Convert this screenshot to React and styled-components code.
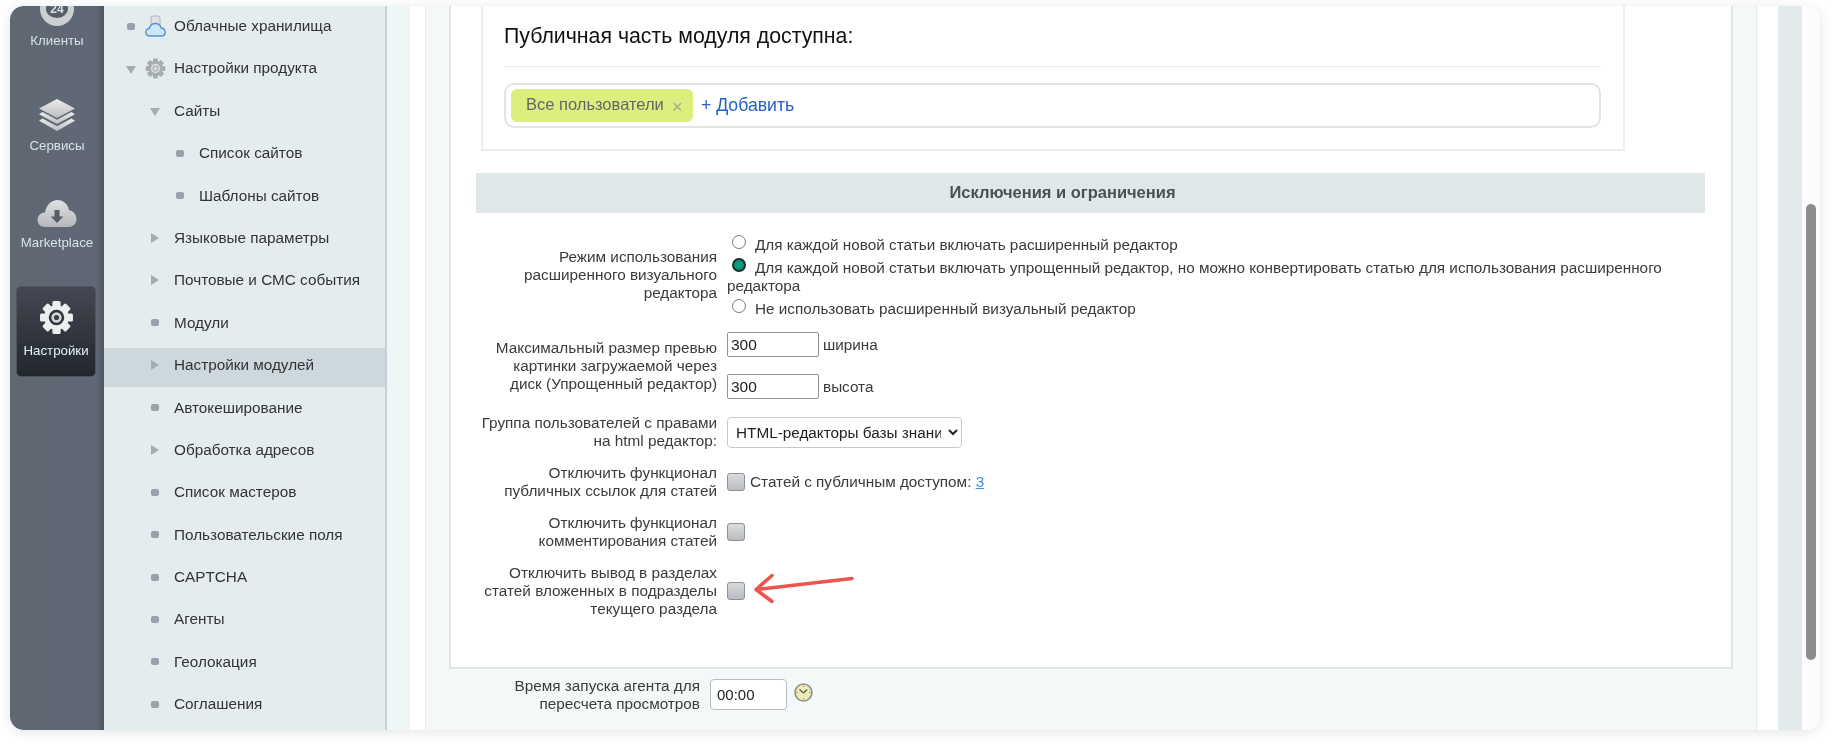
import React from 'react';
import styled, { createGlobalStyle } from 'styled-components';

const GlobalStyle = createGlobalStyle`
  html, body {
    margin: 0;
    height: 100%;
    background: #fff;
    overflow: hidden;
  }
  body {
    font-family: "Liberation Sans", Arial, sans-serif;
    color: #3a3a3a;
  }
`;

const menuItems = [
  { text: 'Облачные хранилища', level: 0, marker: 'dot', icon: 'cloud' },
  { text: 'Настройки продукта', level: 0, marker: 'down', icon: 'gear' },
  { text: 'Сайты', level: 1, marker: 'down' },
  { text: 'Список сайтов', level: 2, marker: 'dot' },
  { text: 'Шаблоны сайтов', level: 2, marker: 'dot' },
  { text: 'Языковые параметры', level: 1, marker: 'right' },
  { text: 'Почтовые и СМС события', level: 1, marker: 'right' },
  { text: 'Модули', level: 1, marker: 'dot' },
  { text: 'Настройки модулей', level: 1, marker: 'right', active: true },
  { text: 'Автокеширование', level: 1, marker: 'dot' },
  { text: 'Обработка адресов', level: 1, marker: 'right' },
  { text: 'Список мастеров', level: 1, marker: 'dot' },
  { text: 'Пользовательские поля', level: 1, marker: 'dot' },
  { text: 'CAPTCHA', level: 1, marker: 'dot' },
  { text: 'Агенты', level: 1, marker: 'dot' },
  { text: 'Геолокация', level: 1, marker: 'dot' },
  { text: 'Соглашения', level: 1, marker: 'dot' },
];

const levelPadding = [19, 43, 68];
const gearTeeth = [0, 45, 90, 135, 180, 225, 270, 315];

function GearIcon({ size, body, hole, core, dot }) {
  return (
    <svg width={size} height={size} viewBox="0 0 34 34">
      {gearTeeth.map((deg) => (
        <rect key={deg} x="13" y="1" width="8" height="9" rx="1.500" fill={body} transform={`rotate(${deg} 17 17)`} />
      ))}
      <circle cx="17" cy="17" r="12" fill={body} />
      <circle cx="17" cy="17" r="7.500" fill={hole} />
      <circle cx="17" cy="17" r="5" fill={core} />
      <circle cx="17" cy="17" r="2.500" fill={dot} />
    </svg>
  );
}

function LayersIcon() {
  return (
    <svg width="38" height="32" viewBox="0 0 38 32">
      <defs>
        <linearGradient id="layerFill" x1="0" y1="0" x2="0" y2="1">
          <stop offset="0" stopColor="#eceded" />
          <stop offset="1" stopColor="#b9bcbf" />
        </linearGradient>
      </defs>
      <path d="M19 0 37 9.500 19 19 1 9.500Z" fill="url(#layerFill)" />
      <path d="M4.500 13 19 20.800 33.500 13 37 15.300 19 25 1 15.300Z" fill="url(#layerFill)" />
      <path d="M4.500 19.500 19 27.300 33.500 19.500 37 21.800 19 32 1 21.800Z" fill="url(#layerFill)" />
    </svg>
  );
}

function MarketCloudIcon() {
  return (
    <svg width="40" height="29" viewBox="0 0 40 29">
      <defs>
        <linearGradient id="cloudFill" x1="0" y1="0" x2="0" y2="1">
          <stop offset="0" stopColor="#dfe0e1" />
          <stop offset="1" stopColor="#b5b8bb" />
        </linearGradient>
      </defs>
      <path
        d="M8 28C3 28 .5 24.500 .5 21 .5 16.500 4 13.500 8 13.500 9 6 14.500 1 20.500 1 26.500 1 31 5.500 32 11 36.500 12 39.500 15.500 39.500 20 39.500 24.500 36 28 31.500 28Z"
        fill="url(#cloudFill)"
      />
      <path d="M17.500 11h5v6.500h3.800L20 24l-6.300-6.500h3.800Z" fill="#555e69" />
    </svg>
  );
}

function StorageIcon() {
  return (
    <svg width="21" height="22" viewBox="0 0 21 22">
      <rect x="6" y="1" width="9" height="11" rx="2" fill="#dfe1e4" stroke="#b0b4b9" />
      <path d="M5 21C2 21 .8 19 .8 17 .8 14.800 2.500 13.500 4.200 13.500 5 10.500 7.500 8.500 10.500 8.500 13.500 8.500 15.500 10.500 16.200 13 18.500 13.300 20.200 15 20.200 17.200 20.200 19.500 18.500 21 16 21Z" fill="#cfe4f7" stroke="#4f96d8" strokeWidth="1.400" />
    </svg>
  );
}

function ClockIcon() {
  return (
    <svg width="19" height="19" viewBox="0 0 19 19">
      <circle cx="9.500" cy="9.500" r="8.500" fill="#ecebb8" stroke="#8f9188" strokeWidth="1.600" />
      <path d="M9.500 10 5.500 6.500M9.500 10l3.500-3.500" stroke="#55574f" strokeWidth="1.200" fill="none" />
      <path d="M9.500 2.500v1.500M9.500 15v1.500M2.500 9.500H4M15 9.500h1.500" stroke="#8f9188" />
    </svg>
  );
}

function RedArrow() {
  return (
    <svg width="101" height="32" viewBox="0 0 101 32">
      <path
        d="M99 5.500 4 16.500M19 2.500 3 16.500 19 28.500"
        fill="none"
        stroke="#ef5350"
        strokeWidth="3.500"
        strokeLinecap="round"
        strokeLinejoin="round"
      />
    </svg>
  );
}

function Rail() {
  return (
    <RailBox>
      <RailItem $pad={0}>
        <Badge>24</Badge>
        <RailLabel>Клиенты</RailLabel>
      </RailItem>
      <RailItem $pad={51}>
        <LayersIcon />
        <RailLabel>Сервисы</RailLabel>
      </RailItem>
      <RailItem $pad={46}>
        <MarketCloudIcon />
        <RailLabel>Marketplace</RailLabel>
      </RailItem>
      <ActiveRailItem>
        <GearIcon size={35} body="#eceeef" hole="#2f333b" core="#d2d4d6" dot="#3a3e46" />
        <RailLabel $active>Настройки</RailLabel>
      </ActiveRailItem>
    </RailBox>
  );
}

function Marker({ type }) {
  if (type === 'dot') return <MarkerSlot><Dot /></MarkerSlot>;
  if (type === 'down') return <MarkerSlot><ArrowDown /></MarkerSlot>;
  return <MarkerSlot><ArrowRight /></MarkerSlot>;
}

function Menu() {
  return (
    <MenuBox>
      {menuItems.map((item) => (
        <MenuRow key={item.text} $level={item.level} $active={item.active}>
          <Marker type={item.marker} />
          {item.icon && (
            <MenuIcon>
              {item.icon === 'cloud'
                ? <StorageIcon />
                : <GearIcon size={21} body="#a9adb1" hole="#d9dcde" core="#b4b8bb" dot="#dfe3e5" />}
            </MenuIcon>
          )}
          <MenuText $withIcon={!!item.icon}>{item.text}</MenuText>
        </MenuRow>
      ))}
    </MenuBox>
  );
}

function AccessPanel() {
  return (
    <Panel>
      <PanelTitle>Публичная часть модуля доступна:</PanelTitle>
      <PanelLine />
      <PillBox>
        <Chip>
          Все пользователи
          <ChipClose>×</ChipClose>
        </Chip>
        <AddLink>+ Добавить</AddLink>
      </PillBox>
    </Panel>
  );
}

function Settings() {
  return (
    <>
      <SectionHead>Исключения и ограничения</SectionHead>
      <FormRows>
        <Row $h={84}>
          <Label>Режим использования<br />расширенного визуального<br />редактора</Label>
          <RadioGroup>
            <RadioLine><Radio type="radio" name="editor" />Для каждой новой статьи включать расширенный редактор</RadioLine>
            <RadioLine>
              <Radio type="radio" name="editor" defaultChecked />
              Для каждой новой статьи включать упрощенный редактор, но можно конвертировать статью для использования расширенного<br />
              редактора
            </RadioLine>
            <RadioLine><Radio type="radio" name="editor" />Не использовать расширенный визуальный редактор</RadioLine>
          </RadioGroup>
        </Row>
        <Row $h={67} $top={15}>
          <Label>Максимальный размер превью<br />картинки загружаемой через<br />диск (Упрощенный редактор)</Label>
          <SizeFields>
            <SizeLine><TextField defaultValue="300" />ширина</SizeLine>
            <SizeLine><TextField defaultValue="300" />высота</SizeLine>
          </SizeFields>
        </Row>
        <Row $h={36} $top={15}>
          <Label>Группа пользователей с правами<br />на html редактор:</Label>
          <Select defaultValue="html">
            <option value="html">HTML-редакторы базы знаний</option>
          </Select>
        </Row>
        <Row $h={36} $top={14}>
          <Label>Отключить функционал<br />публичных ссылок для статей</Label>
          <CheckLine>
            <Check type="checkbox" />
            Статей с публичным доступом:&nbsp;<CountLink>3</CountLink>
          </CheckLine>
        </Row>
        <Row $h={36} $top={14}>
          <Label>Отключить функционал<br />комментирования статей</Label>
          <CheckLine><Check type="checkbox" /></CheckLine>
        </Row>
        <Row $h={54} $top={14}>
          <Label>Отключить вывод в разделах<br />статей вложенных в подразделы<br />текущего раздела</Label>
          <CheckLine>
            <Check type="checkbox" />
            <ArrowMark><RedArrow /></ArrowMark>
          </CheckLine>
        </Row>
      </FormRows>
    </>
  );
}

function App() {
  return (
    <>
      <GlobalStyle />
      <Page>
        <Frame>
          <Rail />
          <Menu />
          <Gutter />
          <WorkArea>
            <LightPanel>
              <WhiteBox>
                <AccessPanel />
                <Settings />
              </WhiteBox>
              <AgentRow>
                <AgentLabel>Время запуска агента для<br />пересчета просмотров</AgentLabel>
                <TimeField defaultValue="00:00" />
                <ClockSlot><ClockIcon /></ClockSlot>
              </AgentRow>
            </LightPanel>
          </WorkArea>
          <SideStrip />
          <ScrollTrack><ScrollThumb /></ScrollTrack>
        </Frame>
      </Page>
    </>
  );
}

const Page = styled.div`
  height: 744px;
  padding: 6px 10px 14px;
  box-sizing: border-box;
`;

const Frame = styled.div`
  display: flex;
  height: 724px;
  overflow: hidden;
  border-radius: 14px;
  background: #fff;
  box-shadow: 0 2px 12px rgba(40, 50, 60, 0.13);
  filter: blur(0.3px);
`;

const RailBox = styled.div`
  flex: 0 0 94px;
  display: flex;
  flex-direction: column;
  align-items: center;
  background: linear-gradient(90deg, #5e6772 0, #5f6874 92%, #4d5560 100%);
  box-sizing: border-box;
`;

const RailItem = styled.div`
  display: flex;
  flex-direction: column;
  align-items: center;
  margin-top: ${(p) => p.$pad}px;
  &:first-child {
    margin-top: -14px;
  }
`;

const Badge = styled.div`
  width: 34px;
  height: 34px;
  box-sizing: border-box;
  border: solid #cdd0d2;
  border-width: 5px 6px 8px;
  border-radius: 50%;
  background: #565e69;
  color: #dcdee0;
  font-size: 12px;
  font-weight: bold;
  line-height: 12px;
  text-align: center;
  padding-top: 6px;
`;

const RailLabel = styled.div`
  margin-top: 7px;
  font-size: 13.3px;
  line-height: 15px;
  color: #d5e3ea;
  ${(p) => p.$active && 'margin-top: 8px; color: #e8f0f5;'}
`;

const ActiveRailItem = styled.div`
  width: 80px;
  height: 91px;
  margin: 36px 2px 0 0;
  box-sizing: border-box;
  padding-top: 13px;
  display: flex;
  flex-direction: column;
  align-items: center;
  border-radius: 5px;
  background: linear-gradient(180deg, #434852 0, #22262d 100%);
  border: 1px solid #4e5560;
`;

const MenuBox = styled.div`
  flex: 0 0 281px;
  display: flex;
  flex-direction: column;
  padding-top: 1px;
  background: #e5ecee;
  border-right: 2px solid #c4d1d8;
`;

const MenuRow = styled.div`
  flex: none;
  display: flex;
  align-items: center;
  box-sizing: border-box;
  height: 38px;
  margin-bottom: 4.4px;
  padding-left: ${(p) => levelPadding[p.$level]}px;
  ${(p) => p.$active && `
    height: 39px;
    margin: 2px 0 1.4px;
    padding-bottom: 5px;
    background: #cdd8dd;
  `}
`;

const MarkerSlot = styled.span`
  flex: 0 0 16px;
  display: flex;
  align-items: center;
  justify-content: center;
`;

const Dot = styled.span`
  width: 8px;
  height: 7px;
  border-radius: 2px;
  background: #98a2aa;
`;

const ArrowRight = styled.span`
  border-left: 8px solid #a3acb1;
  border-top: 5px solid transparent;
  border-bottom: 5px solid transparent;
`;

const ArrowDown = styled.span`
  margin-top: 3px;
  border-top: 8px solid #a3acb1;
  border-left: 5px solid transparent;
  border-right: 5px solid transparent;
`;

const MenuIcon = styled.span`
  flex: 0 0 24px;
  margin: 0 7px 0 4px;
  display: flex;
  justify-content: center;
`;

const MenuText = styled.span`
  margin-left: ${(p) => (p.$withIcon ? 0 : 11)}px;
  font-size: 15.3px;
  color: #333;
  white-space: nowrap;
`;

const Gutter = styled.div`
  flex: 0 0 23px;
  background: #f0f5f6;
`;

const WorkArea = styled.div`
  flex: 1;
  min-width: 0;
  padding: 0 21px 0 15px;
  background: #fff;
`;

const LightPanel = styled.div`
  height: 100%;
  box-sizing: border-box;
  padding: 0 23px;
  background: #f5f8f9;
  border-right: 1px solid #dfe7e9;
  border-left: 1px solid #e5ecef;
`;

const WhiteBox = styled.div`
  height: 663px;
  box-sizing: border-box;
  padding: 0 26px 0 25px;
  background: #fff;
  border: 2px solid #dfe6e8;
  border-top: 0;
`;

const Panel = styled.div`
  width: 1144px;
  height: 145px;
  margin-left: 5px;
  box-sizing: border-box;
  padding: 0 22px 0 21px;
  border: 2px solid #e8eef2;
  border-top: 0;
`;

const PanelTitle = styled.div`
  padding-top: 17px;
  font-size: 21.3px;
  line-height: 26px;
  color: #111;
  white-space: nowrap;
`;

const PanelLine = styled.div`
  height: 1px;
  margin-top: 17px;
  background: #e6e9eb;
`;

const PillBox = styled.div`
  display: flex;
  align-items: center;
  height: 45px;
  margin-top: 16px;
  box-sizing: border-box;
  padding-left: 5px;
  border: 2px solid #e2e4e5;
  border-radius: 10px;
`;

const Chip = styled.div`
  display: flex;
  align-items: center;
  height: 33px;
  box-sizing: border-box;
  padding: 0 10px 2px 15px;
  border-radius: 6px;
  background: #dbee7e;
  color: #666;
  font-size: 16.5px;
  white-space: nowrap;
`;

const ChipClose = styled.span`
  margin: 4px 0 0 8px;
  color: #a5ad85;
  font-size: 19px;
  line-height: 19px;
`;

const AddLink = styled.span`
  margin-left: 8px;
  color: #2462c8;
  font-size: 17.7px;
  white-space: nowrap;
`;

const SectionHead = styled.div`
  width: 1229px;
  height: 40px;
  margin-top: 22px;
  box-sizing: border-box;
  padding-right: 56px;
  background: #e0e7e9;
  color: #4a5154;
  font-size: 16.5px;
  font-weight: bold;
  line-height: 38px;
  text-align: center;
`;

const FormRows = styled.div`
  padding-top: 20px;
  width: 1229px;
`;

const Row = styled.div`
  display: grid;
  grid-template-columns: 241px 1fr;
  column-gap: 10px;
  align-items: center;
  min-height: ${(p) => p.$h}px;
  margin-top: ${(p) => p.$top || 0}px;
`;

const Label = styled.div`
  font-size: 15.3px;
  line-height: 18px;
  color: #3b3b3b;
  text-align: right;
  white-space: nowrap;
`;

const RadioGroup = styled.div`
  align-self: start;
  margin-top: 3px;
  font-size: 15.3px;
  line-height: 17.5px;
`;

const RadioLine = styled.div`
  margin-bottom: 5.5px;
  white-space: nowrap;
  &:last-child {
    margin-bottom: 0;
  }
`;

const Radio = styled.input`
  appearance: none;
  width: 14px;
  height: 14px;
  margin: -4px 9px -2px 5px;
  vertical-align: 3px;
  box-sizing: border-box;
  border: 1.5px solid #767676;
  border-radius: 50%;
  background: #fff;
  &:checked {
    border: 2px solid #1d2d2c;
    background: radial-gradient(circle, #0aa07f 0, #0b8f74 100%);
  }
`;

const SizeFields = styled.div`
  display: flex;
  flex-direction: column;
  gap: 17px;
`;

const SizeLine = styled.div`
  display: flex;
  align-items: center;
  gap: 4px;
  height: 25px;
  font-size: 15.3px;
`;

const TextField = styled.input`
  width: 92px;
  height: 25px;
  box-sizing: border-box;
  padding: 0 3px;
  border: 1px solid #8d9296;
  border-radius: 2px;
  font: 15.5px "Liberation Sans", Arial, sans-serif;
  color: #222;
`;

const Select = styled.select`
  width: 235px;
  height: 31px;
  padding: 0 4px;
  border: 1px solid #c3c9cc;
  border-radius: 4px;
  background: #fff;
  color: #222;
  font: 15.3px "Liberation Sans", Arial, sans-serif;
`;

const CheckLine = styled.div`
  position: relative;
  display: flex;
  align-items: center;
  font-size: 15.3px;
`;

const Check = styled.input`
  appearance: none;
  width: 18px;
  height: 18px;
  margin: 0 5px 0 0;
  box-sizing: border-box;
  border: 1px solid #8a9198;
  border-radius: 3px;
  background: linear-gradient(180deg, #d9dbdd 0, #b9bcc0 100%);
`;

const CountLink = styled.a`
  color: #3f8fd6;
  text-decoration: underline;
`;

const ArrowMark = styled.span`
  position: absolute;
  left: 26px;
  top: -9.5px;
`;

const AgentRow = styled.div`
  display: flex;
  align-items: center;
  height: 31px;
  margin-top: 10px;
`;

const AgentLabel = styled.div`
  width: 251px;
  font-size: 15.3px;
  line-height: 17.5px;
  color: #3b3b3b;
  text-align: right;
  white-space: nowrap;
`;

const TimeField = styled.input`
  width: 77px;
  height: 31px;
  margin-left: 10px;
  box-sizing: border-box;
  padding: 0 6px;
  border: 1px solid #b6bec3;
  border-radius: 4px;
  background: #fff;
  color: #222;
  font: 15px "Liberation Sans", Arial, sans-serif;
`;

const ClockSlot = styled.span`
  display: flex;
  margin: -5px 0 0 7px;
`;

const SideStrip = styled.div`
  flex: 0 0 24px;
  background: #e3eaec;
`;

const ScrollTrack = styled.div`
  flex: 0 0 18px;
  padding: 198px 4px 0;
  box-sizing: border-box;
  background: #fcfcfc;
`;

const ScrollThumb = styled.div`
  width: 10px;
  height: 456px;
  border-radius: 5px;
  background: #8c8c8c;
`;

export default App;
